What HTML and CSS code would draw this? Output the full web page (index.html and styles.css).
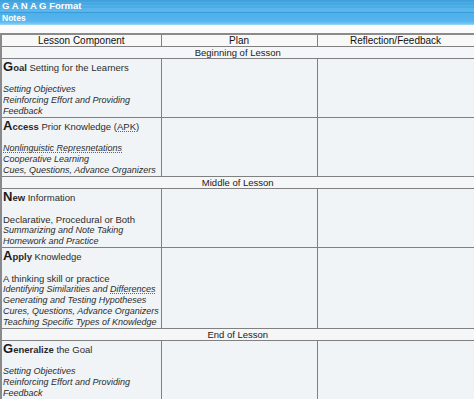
FILE: index.html
```html
<!DOCTYPE html>
<html>
<head>
<meta charset="utf-8">
<link rel="stylesheet" href="styles.css">
</head>
<body>
<div class="titlebar">G A N A G Format</div>
<div class="notesbar">Notes</div>
<table class="ganag">
  <colgroup>
    <col class="c1"><col class="c2"><col class="c3">
  </colgroup>
  <tr class="head">
    <th>Lesson Component</th><th>Plan</th><th>Reflection/Feedback</th>
  </tr>
  <tr class="section"><td colspan="3">Beginning of Lesson</td></tr>
  <tr class="step">
    <td>
      <div class="lead"><span class="big">G</span><b>oal</b> Setting for the Learners</div>
      <div class="blank"></div>
      <div class="it">Setting Objectives</div>
      <div class="it">Reinforcing Effort and Providing Feedback</div>
    </td>
    <td></td><td></td>
  </tr>
  <tr class="step">
    <td>
      <div class="lead"><span class="big">A</span><b>ccess</b> Prior Knowledge (<span class="sp">APK</span>)</div>
      <div class="blank"></div>
      <div class="it"><span class="sp">Nonlinguistic Represnetations</span></div>
      <div class="it">Cooperative Learning</div>
      <div class="it">Cues, Questions, Advance Organizers</div>
    </td>
    <td></td><td></td>
  </tr>
  <tr class="section"><td colspan="3">Middle of Lesson</td></tr>
  <tr class="step">
    <td>
      <div class="lead"><span class="big">N</span><b>ew</b> Information</div>
      <div class="blank"></div>
      <div>Declarative, Procedural or Both</div>
      <div class="it">Summarizing and Note Taking</div>
      <div class="it">Homework and Practice</div>
    </td>
    <td></td><td></td>
  </tr>
  <tr class="step">
    <td>
      <div class="lead"><span class="big">A</span><b>pply</b> Knowledge</div>
      <div class="blank"></div>
      <div>A thinking skill or practice</div>
      <div class="it">Identifying Similarities and <span class="sp">Differences</span></div>
      <div class="it">Generating and Testing Hypotheses</div>
      <div class="it">Cures, Questions, Advance Organizers</div>
      <div class="it">Teaching Specific Types of Knowledge</div>
    </td>
    <td></td><td></td>
  </tr>
  <tr class="section"><td colspan="3">End of Lesson</td></tr>
  <tr class="step">
    <td>
      <div class="lead"><span class="big">G</span><b>eneralize</b> the Goal</div>
      <div class="blank"></div>
      <div class="it">Setting Objectives</div>
      <div class="it">Reinforcing Effort and Providing Feedback</div>
    </td>
    <td></td><td></td>
  </tr>
</table>
</body>
</html>
```
FILE: styles.css
```css
html, body {
  margin: 0;
  padding: 0;
  background: #fbfbfb;
  font-family: "Liberation Sans", Arial, sans-serif;
  overflow: hidden;
}
.titlebar {
  height: 13px;
  line-height: 12px;
  padding-left: 2px;
  font-size: 9.5px;
  font-weight: bold;
  color: #fff;
  background:
    repeating-linear-gradient(to bottom, rgba(255,255,255,0) 0, rgba(255,255,255,0) 2px, rgba(255,255,255,0.08) 2px, rgba(255,255,255,0.08) 3px),
    linear-gradient(to bottom, #3d9fdc 0, #45a8e4 4px, #4aaee8 8px, #62bbef 11px, #3b9cdc 12px, #3b9cdc 13px);
}
.notesbar {
  height: 12px;
  line-height: 11px;
  padding-left: 2px;
  font-size: 8.5px;
  font-weight: bold;
  color: #fff;
  background: linear-gradient(to bottom, #4eb0ea 0, #55b5ee 8px, #7cc8f4 11px, #a9dcf8 12px);
}
.ganag {
  margin: 8px 0 0 0;
  width: 474px;
  border-collapse: collapse;
  table-layout: fixed;
  border: 2px solid #8a8a8a;
  border-right-width: 3px;
  font-size: 9.5px;
  color: #2c2c2c;
}
.c1 { width: 160px; }
.c2 { width: 156px; }
.c3 { width: 158px; }
.ganag th, .ganag td {
  border: 1px solid #808080;
  padding: 0 1px;
  vertical-align: top;
  line-height: 11px;
}
.head th {
  background: #f8f8f8;
  font-weight: normal;
  font-size: 10px;
  color: #111;
  text-align: center;
  height: 11px;
}
.section td {
  background: #f4f6f8;
  text-align: center;
  color: #1a1a1a;
  height: 11px;
}
.step td {
  background: #f0f4f7;
}
.lead {
  line-height: 14px;
  padding-top: 1px;
}
.big {
  font-size: 13px;
  font-weight: bold;
  color: #1a1a1a;
}
.lead b {
  font-weight: bold;
  color: #2a2a2a;
}
.blank { height: 9px; }
.it { font-style: italic; font-size: 9px; }
.sp {
  text-decoration: underline dotted #e03030;
  text-decoration-thickness: 1px;
  text-underline-offset: 1px;
}
```
